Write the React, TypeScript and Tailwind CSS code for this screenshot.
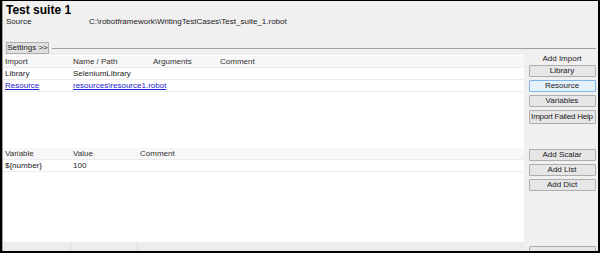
const font = "font-['Liberation_Sans',Arial,sans-serif]";

function SideButton({ label, active }: { label: string; active?: boolean }) {
  return (
    <div
      className={`h-[12px] w-[67px] flex items-center justify-center whitespace-nowrap text-[8px] leading-none text-[#1a1a1a] border rounded-[1px] ${
        active ? "border-[#7eb4ea] bg-[#e5f1fb]" : "border-[#adadad] bg-[#e6e6e6]"
      }`}
    >
      {label}
    </div>
  );
}

function Row({
  cells,
  widths,
  link,
  header,
}: {
  cells: string[];
  widths: string[];
  link?: boolean;
  header?: boolean;
}) {
  return (
    <div
      className={`flex h-[12px] items-center text-[8px] leading-none border-b border-[#ebebeb] ${
        header ? "bg-[#f7f7f7] text-[#333]" : "bg-white text-[#1a1a1a]"
      }`}
    >
      {cells.map((c, i) => (
        <div key={i} className={`${widths[i]} pl-[2px] shrink-0 whitespace-nowrap`}>
          {link && c ? <span className="text-[#2222cc] underline">{c}</span> : c}
        </div>
      ))}
    </div>
  );
}

const importCols = ["w-[68px]", "w-[80px]", "w-[67px]", "w-[80px]"];
const varCols = ["w-[68px]", "w-[67px]", "w-[80px]"];

export default function App() {
  return (
    <div
      className={`${font} w-[600px] h-[253px] bg-[#f0f0f0] border-t border-l-[2px] border-r-[2px] border-b-[2px] border-black flex flex-col overflow-hidden`}
    >
      <div className="h-[54px] shrink-0 pl-[3px] border-l border-[#a0a0a0]">
        <div className="pt-[2px] h-[15px] text-[12px] font-bold leading-[14px] text-black">Test suite 1</div>
        <div className="flex mt-[1px] h-[10px] items-center text-[8px] text-[#1a1a1a]">
          <span className="w-[83px]">Source</span>
          <span>C:\robotframework\WritingTestCases\Test_suite_1.robot</span>
        </div>
        <div className="flex items-center mt-[15px]">
          <div className="h-[12px] w-[43px] flex items-center justify-center whitespace-nowrap text-[8px] leading-none border border-[#adadad] bg-[#e1e1e1] text-[#1a1a1a]">
            Settings &gt;&gt;
          </div>
          <div className="flex-1 ml-[3px] mr-[2px] h-px bg-[#a0a0a0]" />
        </div>
      </div>

      <div className="flex flex-1 min-h-0">
        <div className="w-[522px] shrink-0 flex flex-col border-l border-[#a0a0a0]">
          <div className="h-[91px] bg-white pt-px">
            <Row header widths={importCols} cells={["Import", "Name / Path", "Arguments", "Comment"]} />
            <Row widths={importCols} cells={["Library", "SeleniumLibrary", "", ""]} />
            <Row link widths={importCols} cells={["Resource", "resources\\resource1.robot", "", ""]} />
          </div>
          <div className="h-[96px] bg-white pt-[2px]">
            <Row header widths={varCols} cells={["Variable", "Value", "Comment"]} />
            <Row widths={varCols} cells={["${number}", "100", ""]} />
          </div>
          <div className="flex-1 bg-[#ececec] flex">
            <div className="w-[68px] border-r border-[#dcdcdc]" />
            <div className="w-[67px] border-r border-[#dcdcdc]" />
          </div>
        </div>

        <div className="flex-1 flex flex-col items-center pl-[3px] pr-[1px]">
          <div className="h-[14px] flex items-end pb-[1px] text-[8px] leading-none text-[#1a1a1a]">Add Import</div>
          <div className="flex flex-col gap-[3px] mt-px">
            <SideButton label="Library" />
            <SideButton label="Resource" active />
            <SideButton label="Variables" />
            <div className="h-[14px] w-[67px] flex items-center justify-center whitespace-nowrap tracking-[-0.2px] text-[8px] leading-none text-[#1a1a1a] border border-[#adadad] bg-[#e6e6e6] rounded-[1px]">
              Import Failed Help
            </div>
          </div>
          <div className="flex flex-col gap-[3px] mt-[25px]">
            <SideButton label="Add Scalar" />
            <SideButton label="Add List" />
            <SideButton label="Add Dict" />
          </div>
          <div className="mt-[55px]">
            <SideButton label="" />
          </div>
        </div>
      </div>
    </div>
  );
}
